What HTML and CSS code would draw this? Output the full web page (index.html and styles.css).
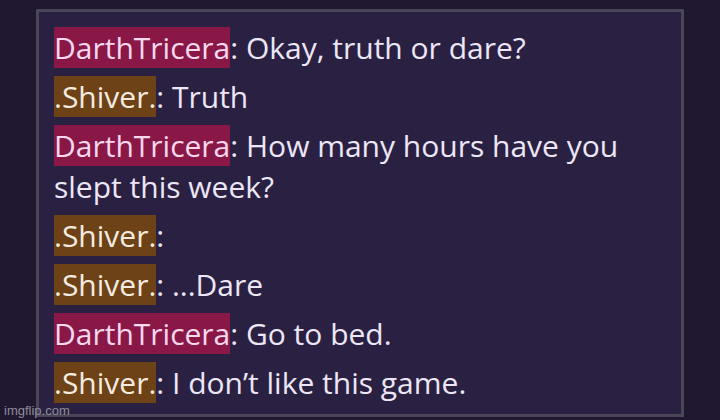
FILE: index.html
```html
<!DOCTYPE html>
<html>
<head>
<meta charset="utf-8">
<link rel="stylesheet" href="styles.css">
</head>
<body>
<div class="stage">
  <div class="chat">
    <p class="line"><span class="name darth">DarthTricera</span>: Okay, truth or dare?</p>
    <p class="line"><span class="name shiver">.Shiver.</span>: Truth</p>
    <p class="line"><span class="name darth">DarthTricera</span>: How many hours have you slept this week?</p>
    <p class="line"><span class="name shiver">.Shiver.</span>:</p>
    <p class="line"><span class="name shiver">.Shiver.</span>: ...Dare</p>
    <p class="line"><span class="name darth">DarthTricera</span>: Go to bed.</p>
    <p class="line"><span class="name shiver">.Shiver.</span>: I don’t like this game.</p>
  </div>
  <div class="watermark">imgflip.com</div>
</div>
</body>
</html>
```
FILE: styles.css
```css
html, body {
  margin: 0;
  padding: 0;
}
body {
  background: #1f1830;
  width: 720px;
  height: 420px;
  overflow: hidden;
}
.stage {
  position: relative;
  width: 720px;
  height: 420px;
  padding: 9px 0 0 36px;
  box-sizing: border-box;
}
.chat {
  width: 648px;
  height: 408px;
  box-sizing: border-box;
  border: 3px solid #4b4657;
  background: #2a2142;
  padding: 15px 15px 0 15px;
  display: flex;
  flex-direction: column;
  gap: 8px;
  font-family: "Open Sans", "Noto Sans", sans-serif;
  font-size: 30px;
  color: #ece6f6;
}
.line {
  margin: 0;
  line-height: 41px;
}
.darth {
  background: #8a1846;
  color: #f7d8ef;
}
.shiver {
  background: #6d4216;
  color: #f5ebe0;
}
.watermark {
  position: absolute;
  left: 4px;
  bottom: 2px;
  font-family: "Liberation Sans", Arial, sans-serif;
  font-size: 13px;
  color: #8f8c99;
}
```
